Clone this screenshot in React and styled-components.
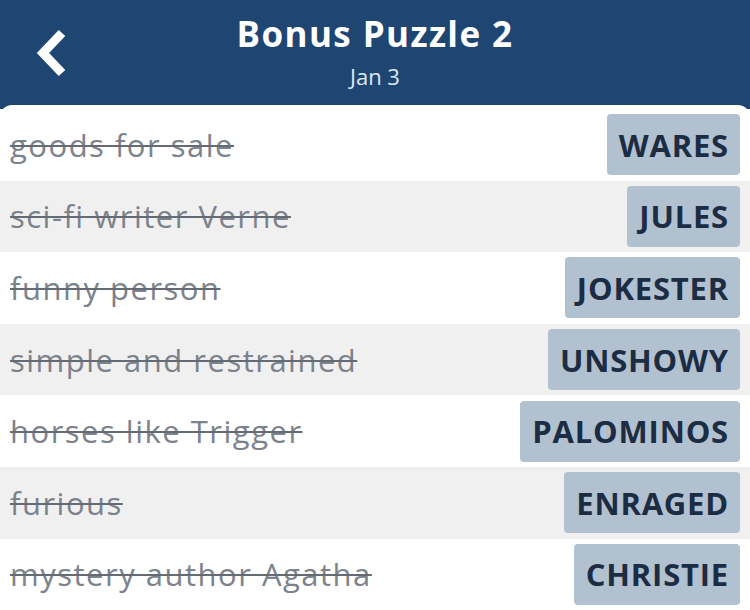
import React from "react";
import styled, { createGlobalStyle } from "styled-components";

const Global = createGlobalStyle`
  html, body { margin: 0; padding: 0; background: #1f4673; }
  body { font-family: "Open Sans", Lato, sans-serif; }
  * { box-sizing: border-box; }
`;

const Page = styled.div`
  width: 750px;
  height: 610px;
  overflow: hidden;
  background: #1f4673;
  display: flex;
  flex-direction: column;
`;

const Header = styled.header`
  height: 105px;
  flex: none;
  display: grid;
  grid-template-columns: 100px 1fr 100px;
  align-items: start;
`;

const BackButton = styled.button`
  border: 0;
  background: none;
  padding: 0;
  margin-left: 34px;
  margin-top: 26px;
  width: 40px;
  height: 56px;
  display: flex;
  align-items: center;
  justify-content: center;
  cursor: pointer;
`;

const TitleBlock = styled.div`
  display: flex;
  flex-direction: column;
  align-items: center;
  color: #fff;
  padding-top: 12px;
`;

const Title = styled.h1`
  margin: 0;
  font-size: 35px;
  font-weight: 700;
  line-height: 44px;
  letter-spacing: 1.4px;
`;

const Sub = styled.div`
  font-size: 22px;
  line-height: 26px;
  margin-top: 7px;
  color: #dfe7f1;
`;

const List = styled.ul`
  list-style: none;
  margin: 0;
  padding: 4px 0 0;
  flex: 1;
  background: #fff;
  border-radius: 12px 12px 0 0;
`;

const Row = styled.li`
  height: 71.6px;
  display: flex;
  align-items: center;
  justify-content: space-between;
  padding: 0 10px;
  background: ${(p) => (p.$alt ? "#f0f0f0" : "#fff")};
`;

const Clue = styled.span`
  font-size: 31px;
  letter-spacing: 1.5px;
  color: #7d838c;
  text-decoration: line-through;
  text-decoration-color: #646b75;
  text-decoration-thickness: 2px;
  white-space: nowrap;
`;

const Answer = styled.span`
  height: 61px;
  display: flex;
  align-items: center;
  padding: 0 11px 0 12px;
  border-radius: 4px;
  background: #b1c1d0;
  color: #1c2d43;
  font-size: 31px;
  font-weight: 700;
  letter-spacing: 0.8px;
`;

const items = [
  ["goods for sale", "WARES"],
  ["sci-fi writer Verne", "JULES"],
  ["funny person", "JOKESTER"],
  ["simple and restrained", "UNSHOWY"],
  ["horses like Trigger", "PALOMINOS"],
  ["furious", "ENRAGED"],
  ["mystery author Agatha", "CHRISTIE"],
];

export default function App() {
  return (
    <Page>
      <Global />
      <Header>
        <BackButton aria-label="Back">
          <svg width="40" height="56" viewBox="0 0 40 56">
            <path d="M28 7 L9 27 L28 47" fill="none" stroke="#fff" strokeWidth="9" strokeLinecap="butt" strokeLinejoin="miter" />
          </svg>
        </BackButton>
        <TitleBlock>
          <Title>Bonus Puzzle 2</Title>
          <Sub>Jan 3</Sub>
        </TitleBlock>
        <div />
      </Header>
      <List>
        {items.map(([c, a], i) => (
          <Row key={a} $alt={i % 2 === 1}>
            <Clue>{c}</Clue>
            <Answer>{a}</Answer>
          </Row>
        ))}
      </List>
    </Page>
  );
}
